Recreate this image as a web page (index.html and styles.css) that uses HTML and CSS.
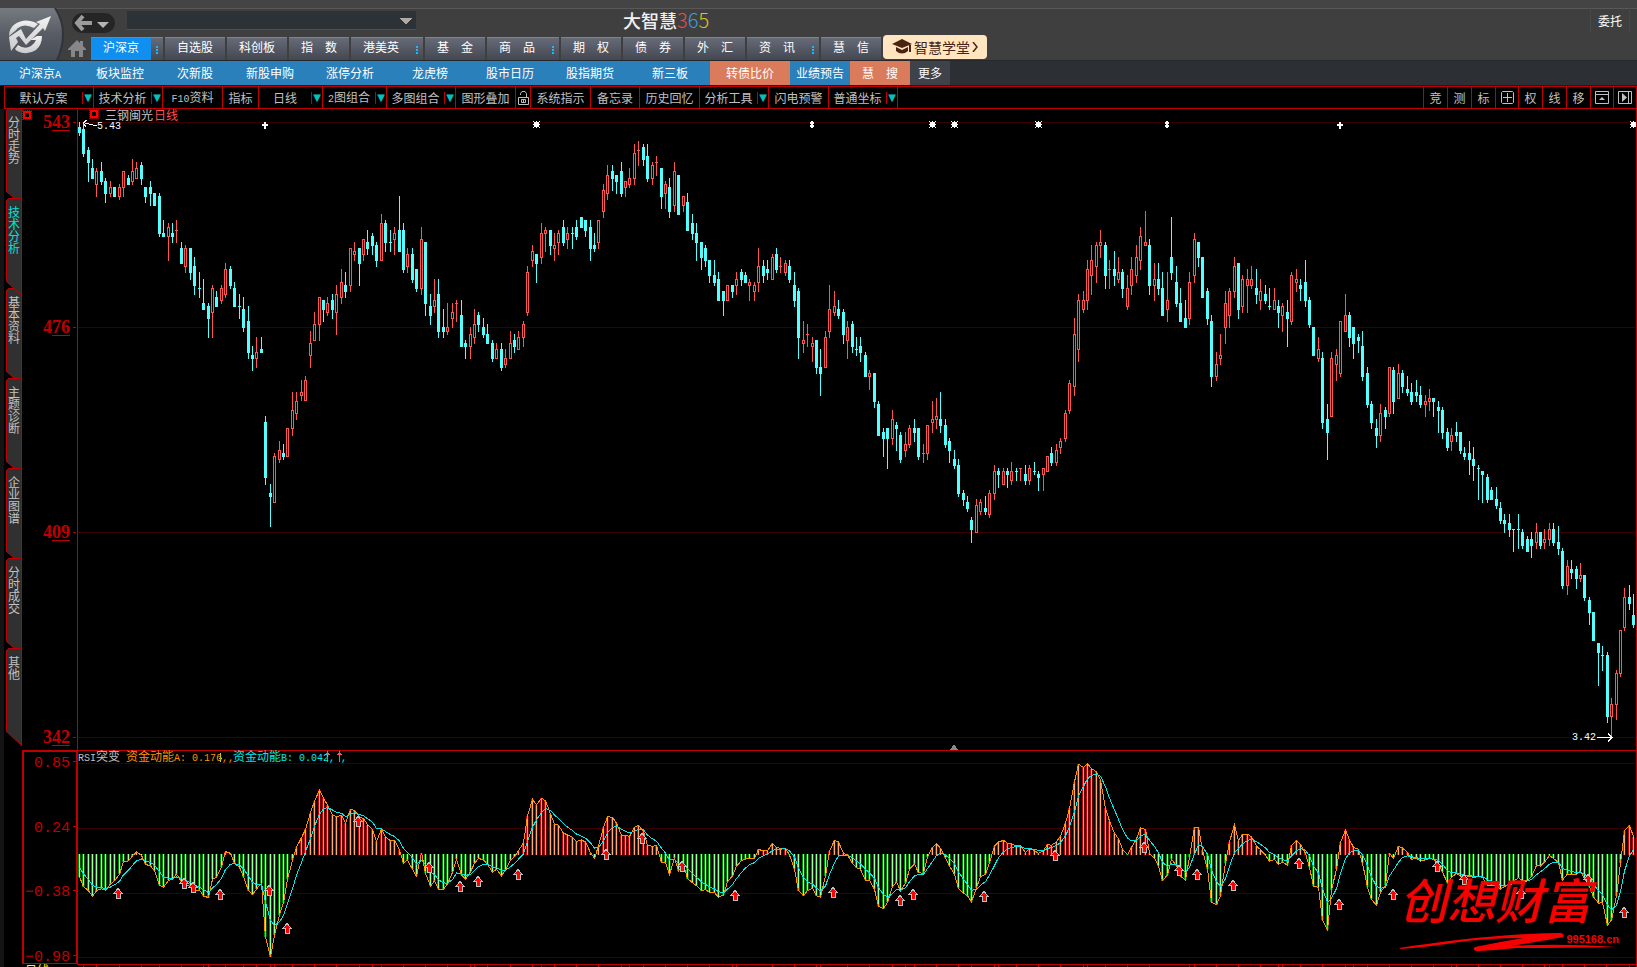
FILE: index.html
```html
<!DOCTYPE html>
<html lang="zh-CN">
<head>
<meta charset="utf-8">
<title>大智慧365</title>
<link rel="stylesheet" href="styles.css">
</head>
<body>
<header class="top">
  <div class="logo">
    <svg width="65" height="53" viewBox="0 8 65 53" aria-label="大智慧">
      <defs>
        <linearGradient id="plate" x1="0" y1="0" x2="0" y2="1"><stop offset="0" stop-color="#777b81"/><stop offset="0.5" stop-color="#585d65"/><stop offset="1" stop-color="#484d56"/></linearGradient>
        <linearGradient id="silver" x1="0" y1="0" x2="0" y2="1"><stop offset="0" stop-color="#f2f2f2"/><stop offset="1" stop-color="#c9cacd"/></linearGradient>
      </defs>
      <path d="M0 8H55Q63 20 63 34Q63 48 57 60H0Z" fill="url(#plate)"/>
      <path d="M55 8Q63 20 63 34Q63 48 57 60" fill="none" stroke="#30343a" stroke-width="2"/>
      <g fill="url(#silver)">
        <path d="M9 36Q9 28 15 24Q24 18 34 22L38 24L34 28Q24 23 18 28L15 31L9 36Z"/>
        <path d="M37 36H42Q42 45 36 50Q27 56 17 51L15 49L18 45Q25 50 31 46Q35 43 36 40H30Z"/>
        <path d="M9 37L21 29L26 39L40 24L36 22L51 16L45 31L43 28L26 45L19 36L16 38L18 42L11 51Z"/>
      </g>
    </svg>
  </div>
  <div class="top-body">
    <div class="title-row">
      <button class="back" aria-label="后退">
        <svg width="42" height="20" viewBox="0 0 42 20"><path d="M11 3L5 10L11 17M5 10H20" fill="none" stroke="#9b9b9b" stroke-width="4"/><path d="M25 9H37L31 15Z" fill="#b5b5b5"/></svg>
      </button>
      <select class="address" aria-label="地址"><option></option></select>
      <h1 class="brand">大智慧<span class="d3">3</span><span class="d6">6</span><span class="d5">5</span></h1>
      <button class="entrust">委托</button>
    </div>
    <nav class="tabs" aria-label="市场">
      <a class="home" href="#" aria-label="首页"><svg width="18" height="17" viewBox="0 0 18 17"><path d="M9 0L12 3V1H15V6L18 9V10H15V17H11V11H7V17H3V10H0V9Z" fill="#85878a"/></svg></a>
      <a class="tab wide current" href="#"><span>沪深京</span><i class="dots"></i></a>
      <a class="tab" href="#"><span>自选股</span></a>
      <a class="tab" href="#"><span>科创板</span></a>
      <a class="tab" href="#"><span>指&emsp;数</span></a>
      <a class="tab wide" href="#"><span>港美英</span><i class="dots"></i></a>
      <a class="tab" href="#"><span>基&emsp;金</span></a>
      <a class="tab wide" href="#"><span>商&emsp;品</span><i class="dots"></i></a>
      <a class="tab" href="#"><span>期&emsp;权</span></a>
      <a class="tab" href="#"><span>债&emsp;券</span></a>
      <a class="tab" href="#"><span>外&emsp;汇</span></a>
      <a class="tab wide" href="#"><span>资&emsp;讯</span><i class="dots"></i></a>
      <a class="tab" href="#"><span>慧&emsp;信</span></a>
      <a class="school" href="#">
        <svg width="20" height="17" viewBox="0 0 20 17"><path d="M0 5L10 0L20 5L10 9ZM4 8L10 11L16 8V12Q10 17 4 12ZM17 6H19V13H17Z" fill="#4a2410"/></svg>
        <span>智慧学堂</span>
        <svg width="6" height="10" viewBox="0 0 6 10"><path d="M1 0L5 5L1 10" fill="none" stroke="#4a2410" stroke-width="1.500"/></svg>
      </a>
    </nav>
  </div>
</header>

<nav class="subnav" aria-label="板块">
  <a href="#">沪深京<span class="half">A</span></a><a href="#">板块监控</a><a class="short" href="#">次新股</a><a href="#">新股申购</a><a href="#">涨停分析</a><a href="#">龙虎榜</a><a href="#">股市日历</a><a href="#">股指期货</a><a href="#">新三板</a><a class="hot" href="#">转债比价</a><a class="narrow" href="#">业绩预告</a><a class="hot narrow" href="#">慧&emsp;搜</a><a class="more" href="#">更多</a>
</nav>

<div class="toolbar">
  <button class="w89 drop"><span>默认方案</span></button>
  <button class="w69 drop"><span>技术分析</span></button>
  <button class="w60"><span><b class="half">F10</b>资料</span></button>
  <button class="w36"><span>指标</span></button>
  <button class="w64 drop"><span>日线</span></button>
  <button class="w64 drop"><span><b class="half">2</b>图组合</span></button>
  <button class="w69 drop"><span>多图组合</span></button>
  <button class="w60"><span>图形叠加</span></button>
  <button class="w15" aria-label="锁定"><svg width="11" height="14" viewBox="0 0 11 14"><path d="M.5 6.500H10.500V13.500H.5ZM2.500 4V2.500L4 .5H7L8.500 2.500V6M3.500 8.500H7.500V11.500H3.500ZM5.500 8.500V11.500" fill="none" stroke="#c0c0c0"/></svg></button>
  <button class="w60"><span>系统指示</span></button>
  <button class="w49"><span>备忘录</span></button>
  <button class="w60"><span>历史回忆</span></button>
  <button class="w69 drop"><span>分析工具</span></button>
  <button class="w60"><span>闪电预警</span></button>
  <button class="w69 drop"><span>普通坐标</span></button>
  <div class="tools">
    <button>竞</button><button>测</button><button>标</button>
    <button aria-label="放大"><svg width="13" height="13" viewBox="0 0 13 13"><path d="M1.500 .5H11.500L12.500 1.500V11.500L11.500 12.500H1.500L.5 11.500V1.500ZM2 6.500H11M6.500 2V11" fill="none" stroke="#c0c0c0"/></svg></button>
    <button>权</button><button>线</button><button>移</button>
    <button aria-label="窗口"><svg width="14" height="13" viewBox="0 0 14 13"><path d="M.5 .5H13.500V12.500H.5ZM1 3.500H13" fill="none" stroke="#c0c0c0"/><path d="M4 9H10L7 6Z" fill="#c0c0c0"/></svg></button>
    <button aria-label="下一个"><svg width="14" height="13" viewBox="0 0 14 13"><path d="M.5 .5H13.500V12.500H.5ZM10.500 1V12" fill="none" stroke="#c0c0c0"/><path d="M4 2L9 6.500L4 11Z" fill="#c0c0c0"/></svg></button>
  </div>
</div>

<main class="work">
  <nav class="side" aria-label="页面">
    <button><svg viewBox="0 0 16 100"><path d="M15.500 .5H2.500L.5 2.500V83.500L8.500 90.500H15.500Z"/></svg><span>分时走势</span></button>
    <button class="current"><svg viewBox="0 0 16 100"><path d="M15.500 .5H2.500L.5 2.500V83.500L15.500 97.500Z"/></svg><span>技术分析</span></button>
    <button><svg viewBox="0 0 16 100"><path d="M15.500 .5H2.500L.5 2.500V83.500L8.500 90.500H15.500Z"/></svg><span>基本资料</span></button>
    <button><svg viewBox="0 0 16 100"><path d="M15.500 .5H2.500L.5 2.500V83.500L8.500 90.500H15.500Z"/></svg><span>主题诊断</span></button>
    <button><svg viewBox="0 0 16 100"><path d="M15.500 .5H2.500L.5 2.500V83.500L8.500 90.500H15.500Z"/></svg><span>企业图谱</span></button>
    <button><svg viewBox="0 0 16 100"><path d="M15.500 .5H2.500L.5 2.500V83.500L8.500 90.500H15.500Z"/></svg><span>分时成交</span></button>
    <button><svg viewBox="0 0 16 100"><path d="M15.500 .5H2.500L.5 2.500V83.500L15.500 97.500Z"/></svg><span>其他</span></button>
  </nav>

  <div class="axis price-axis">
    <i class="pin"></i>
    <span>5<u>43</u></span><span>4<u>76</u></span><span>4<u>09</u></span><span>3<u>42</u></span>
  </div>
  <section class="panel price" aria-label="日线">
    <svg id="price" class="plot" viewBox="77 109 1560 641" preserveAspectRatio="none"></svg>
    <div class="legend"><i class="gear"></i><span>三钢闽光</span><span class="period">日线</span></div>
    <span class="mark high">5.43</span>
    <span class="mark low">3.42</span>
  </section>

  <div class="axis rsi-axis"><span>0.85</span><span>0.24</span><span>−0.38</span><span>−0.98</span></div>
  <section class="panel rsi" aria-label="RSI突变">
    <svg id="rsi" class="plot" viewBox="77 750 1560 217" preserveAspectRatio="none"></svg>
    <div class="readout"><span><b class="half">RSI</b>突变</span><span class="a">资金动能<b class="half">A: 0.176,,</b></span><span class="b">资金动能<b class="half">B: 0.042, ,</b></span></div>
    <div class="watermark">
      <strong>创想财富</strong>
      <svg width="220" height="20" viewBox="0 0 220 20"><path d="M0 15Q60 6 88 4Q130 0 162 0Q166 1 164 4Q150 7 112 13Q160 10 217 14Q160 15 117 15Q100 17 80 18Q72 18 76 14Q100 9 124 5Q90 5 60 9Q30 14 2 16Z" fill="#f60000"/></svg>
      <small>995168.cn</small>
    </div>
  </section>
  <div class="foot">日线</div>
</main>
<script src="chart.js"></script>
</body>
</html>
```
FILE: styles.css
```css
* { box-sizing: border-box; }
body {
  margin: 0;
  height: 100vh;
  overflow: hidden;
  display: flex;
  flex-direction: column;
  background: #000;
  color: #fff;
  font: 12px/16px "Noto Sans CJK SC", sans-serif;
}
a { color: inherit; text-decoration: none; }
button {
  margin: 0;
  padding: 0;
  border: 0;
  background: none;
  color: inherit;
  font: inherit;
  white-space: nowrap;
}
svg { display: block; flex: none; }
.half { font: 10px/12px "Liberation Mono", monospace; white-space: pre; }

/* Title bar and market tabs */
.top {
  flex: none;
  display: flex;
  height: 61px;
  padding-top: 8px;
  background: linear-gradient(#444 8px, #585858 8px, #585858 9px, #3f3f3f 9px);
  border-bottom: 1px solid #26282b;
}
.logo { width: 65px; }
.top-body { flex: 1; min-width: 0; display: flex; flex-direction: column; }
.title-row { display: flex; height: 27px; }
.back {
  margin: 5px 0 0 7px;
  width: 43px;
  height: 20px;
  border-radius: 10px;
  background: #252525;
}
.address {
  margin: 3px 0 0 12px;
  width: 289px;
  height: 19px;
  border: 0;
  border-bottom: 1px solid #4b5054;
  appearance: none;
  background: linear-gradient(to top right, #2c3236 50%, #b0aaa6 50%) 273px 7px / 6px 7px no-repeat,
    linear-gradient(to top left, #2c3236 50%, #b0aaa6 50%) 279px 7px / 6px 7px no-repeat,
    #2c3236;
}
.brand { margin: 0 0 0 207px; font-size: 18px; line-height: 24px; font-weight: 500; color: #f0f0f0; }
.brand span { font-size: 20px; font-weight: 300; }
.brand .d3 { color: #e0504a; }
.brand .d6 { color: #3a9fe0; }
.brand .d5 { color: #e0c020; }
.entrust { margin: 0 7px 0 auto; width: 40px; height: 25px; border: solid #484848; border-width: 0 1px; }
.tabs { display: flex; align-items: flex-end; gap: 2px; height: 25px; }
.home { display: flex; justify-content: center; width: 24px; height: 20px; }
.tab {
  display: flex;
  width: 60px;
  height: 23px;
  border-top: 1px solid #7e838c;
  background: linear-gradient(#666b78, #434751);
  line-height: 18px;
}
.tab.wide { width: 72px; }
.tab span { width: 60px; text-align: center; }
.tab.current span { height: 22px; background: #0f8ff0; }
.dots { width: 2px; height: 8px; margin: 8px 0 0 5px; background: repeating-linear-gradient(#1fb6ff 0 2px, transparent 2px 3px); }
.school {
  display: flex;
  align-items: center;
  justify-content: center;
  gap: 2px;
  width: 104px;
  height: 24px;
  margin-bottom: 1px;
  border-radius: 4px;
  background: #ffe6c0;
  color: #4a2410;
  font-size: 14px;
}

/* Sector links */
.subnav {
  flex: none;
  display: flex;
  height: 25px;
  background: #2c3035;
  border-bottom: 1px solid #1c1e20;
  line-height: 24px;
  text-align: center;
}
.subnav a { width: 80px; background: #2a80ba; }
.subnav .short { width: 70px; }
.subnav .narrow { width: 60px; }
.subnav .hot { background: #da7b5c; }
.subnav .more { width: 40px; background: #3f4249; }

/* Chart tool bar */
.toolbar {
  flex: none;
  display: flex;
  height: 23px;
  margin-left: 4px;
  border: solid #c00000;
  border-width: 1px 0 1px 1px;
  color: #c0c0c0;
}
.toolbar button {
  display: flex;
  flex: none;
  align-items: center;
  justify-content: center;
  border-right: 1px solid #c00000;
}
.toolbar span { flex: 1; text-align: center; }
.drop::after {
  content: "▼";
  width: 10px;
  border-left: 1px solid #c00000;
  color: #00c0c0;
  font: 10px/12px "DejaVu Sans", sans-serif;
}
.w15 { width: 15px; }
.w36 { width: 36px; }
.w49 { width: 49px; }
.w60 { width: 60px; }
.w64 { width: 64px; }
.w69 { width: 69px; }
.w89 { width: 89px; }
.tools { display: flex; margin-left: auto; border-left: 1px solid #c00000; }
.tools button { width: 24px; }
.tools button:nth-child(4), .tools button:nth-child(8), .tools button:nth-child(9) { width: 23px; }

/* Work area */
.work {
  flex: 1;
  min-height: 0;
  display: grid;
  grid-template: 641fr 214fr 3px / 22px 55px 1fr;
}
.side { grid-row: 1 / 4; padding-left: 6px; background: linear-gradient(90deg, #141414 4px, #000 4px); }
.side button { position: relative; display: block; width: 16px; height: 90px; color: #c0c0c0; }
.side svg { position: absolute; top: -1px; left: 0; width: 16px; height: 100px; }
.side path { fill: #303030; stroke: #c00000; }
.side span { position: absolute; top: 7px; left: 2px; width: 12px; line-height: 12px; white-space: normal; }
.side .current { z-index: 1; color: #00e0e0; }
.axis { display: flex; flex-direction: column; justify-content: space-between; color: #c00000; text-align: right; }
.axis span::after { content: ""; display: inline-block; width: 3px; height: 1px; margin: 0 0 5px 3px; background: #c00000; }
.price-axis { position: relative; min-width: 0; padding-right: 1px; font: bold 18px/26px "Liberation Serif", serif; }
.price-axis u { text-decoration-thickness: 1px; text-underline-offset: 2px; }
.rsi-axis { padding-top: 7px; border: 2px solid #c00000; border-width: 2px 1px 1px 2px; font: 15px/10px "Liberation Mono", monospace; }
.pin, .gear { width: 8px; height: 8px; border: 2px solid #f00; outline: 1px dotted #a00; }
.pin { position: absolute; top: 2px; left: 1px; }
.panel { position: relative; min-width: 0; min-height: 0; }
.rsi { grid-row: 2 / 4; grid-column: 3; }
.plot { position: absolute; inset: 0; width: 100%; height: 100%; shape-rendering: crispEdges; }
.legend { position: relative; display: flex; padding-left: 13px; line-height: 12px; color: #c0c0c0; }
.gear { margin: 1px 7px 0 0; }
.period { margin-left: 1px; color: #ff5050; }
.mark { position: absolute; font: 10px/12px "Liberation Mono", monospace; }
.high { top: 12px; left: 20px; }
.low { right: 41px; bottom: 6px; }
.readout { position: relative; display: flex; padding-left: 1px; line-height: 12px; color: #c0c0c0; }
.a { margin-left: 6px; color: #ff9000; }
.b { margin-left: -1px; color: #00e8e8; }
.watermark { position: absolute; right: 18px; bottom: 12px; width: 220px; height: 84px; color: #f60000; }
.watermark strong { display: block; font-size: 48px; line-height: 54px; font-weight: 500; font-style: italic; }
.watermark svg { position: absolute; left: 0; bottom: 2px; }
.watermark small { position: absolute; right: 0; bottom: 10px; font: bold 11px/12px "Liberation Sans", sans-serif; }
.foot { grid-row: 3; grid-column: 2; overflow: hidden; padding-left: 3px; line-height: 12px; color: #ff0; }
```
FILE: chart.js
```js
// Quotes: colour (c falling, r rising), x, high, body top, body bottom, low.
// Each block starts with its origin; the values are in thirds of a unit.
const quotes = [
  [0, 100, `c238 65 80 98 107,c250 65 87 161 170,c265 140 150 188 245,c277 177 204 236 236,r289 204 213 254 290,c304 186 213 245 254,c316 234 243 281 308,r331 243 261 281 290,c343 261 261 290 290,r358 252 261 290 299,r370 213 213 263 290,c385 225 234 254 254,r397 177 213 245 254,r409 186 204 236 236,c424 186 195 236 254,c436 261 261 290 308,c451 243 261 281 317,c463 279 279 317 317,c478 279 288 401 410,c490 360 399 410 410,r505 369 381 410 482,c517 369 399 410 428,r529 360 391 392 428,c544 426 444 491 491,r556 435 444 500 518,c571 444 444 518 539,c583 471 498 557 584,c598 516 564 566 593,c610 537 609 629 629,c625 609 618 656 713,r637 555 564 638 713,c649 573 591 620 620,r664 555 564 602 611,r676 489 507 584 593,c691 498 507 557 566,c703 546 564 620 620,c718 582 618 620 656,c730 591 627 683 695,c745 618 663 758 776,c757 738 765 776 812,r769 711 756 776 803,c784 711 747 758 758,c796 948 966 1133 1154,c811 1152 1179 1190 1280,r823 1059 1068 1208 1208,r838 1023 1050 1079 1088,c850 1032 1059 1070 1079,r862 984 984 1070 1070,r877 876 930 986 1007,r889 876 903 941 959`],
  [300, 120, `r4 780 816 827 843,r16 768 780 843 843,r31 633 669 707 743,r43 576 612 662 662,r58 531 531 614 662,c70 540 540 569 605,r82 531 549 578 587,c97 522 540 569 596,r109 495 522 578 644,r124 447 486 533 551,c136 456 495 515 533,r151 384 384 497 515,r163 366 393 404 422,c178 384 384 431 497,r190 357 357 404 422,c202 330 366 386 404,c217 339 348 377 404,c229 366 375 422 440,r244 282 309 422 422,c256 300 309 368 395,c271 330 366 368 395,r283 321 339 359 404,c298 228 330 395 395,c310 309 330 449 458,r322 384 402 440 458,c337 384 402 479 488,c349 447 447 506 515,r364 321 357 506 524,c376 366 366 551 587,c391 522 558 587 614,r403 477 540 560 578,c415 477 522 635 653,c430 567 621 635 653,r442 549 621 635 644,r457 549 576 596 623,r469 540 549 551 605,c484 540 585 680 680,c496 660 669 680 716,r511 621 642 680 716,r523 567 612 653 671,c535 576 585 614 635,c550 594 621 644 653,c562 612 642 671 671,c577 660 669 716 725,r589 669 687 716 716,c604 669 687 743 752,r616 687 714 734 743,r631 633 669 716 716,c643 642 660 680 698,r655 633 651 689 689,r670 603 612 653 680,r682 438 456 578 587,r697 375 393 422 440,c709 402 402 431 488,r724 309 339 413 431,r736 321 330 341 395,c751 330 330 377 404,r763 339 375 386 422,r775 330 339 368 404,c790 300 321 368 377,r802 321 339 359 386,c817 321 339 341 386,c829 300 321 350 359,c844 291 291 323 323,c856 300 300 332 350,c871 300 321 386 422,c883 339 375 386 395,r895 300 300 368 386,r910 192 210 275 293,r922 135 165 221 239,c937 135 153 177 212,c949 165 165 185 221,c964 126 153 221 230,r976 183 183 203 230,r988 144 174 194 203,r1003 72 99 177 194,r1015 63 90 92 137,c1030 72 81 119 137,c1042 72 108 177 185,r1057 126 135 177 194,r1069 108 126 128 167,c1084 144 144 230 266,r1096 183 192 221 266,c1108 174 201 275 293,r1123 126 153 257 275,c1135 165 165 284 284,r1150 228 228 257 275,c1162 219 246 332 332,c1177 282 309 341 359,c1189 309 339 368 422,c1204 366 366 413 449,c1216 375 384 422 440,c1228 420 420 467 488,c1243 420 465 488 497,c1255 456 477 542 542,c1270 513 513 542 587,r1282 495 495 542 542,c1297 495 495 515 533,r1309 456 477 497 524,c1324 447 456 479 497,c1336 456 465 488 488,r1348 477 486 497 542`],
  [750, 200, `r13 246 255 275 302,r25 144 198 248 275,c40 180 198 227 248,c52 180 207 218 239,r67 162 171 239 239,c79 144 162 209 218,r91 171 198 200 218,r106 180 189 218 227,c118 180 198 239 248,c133 216 255 302 320,c145 264 273 413 476,r160 363 420 431 458,r172 372 402 404 440,r187 411 429 440 485,c199 420 420 503 521,c211 447 501 521 587,r226 393 411 503 503,r238 255 327 395 413,r253 273 318 338 347,c265 300 327 347 356,c280 327 336 404 431,r292 363 381 422 476,c307 363 372 440 458,c319 411 447 449 467,c331 411 438 458 485,c346 456 465 530 530,r358 510 519 530 569,c373 519 519 605 623,c385 603 612 707 707,c400 684 696 716 770,c412 684 684 716 806,r427 630 657 716 734,c439 666 675 686 752,c451 696 705 779 788,r466 696 732 752 770,r478 675 684 734 743,c493 657 684 698 725,c505 684 684 770 779,r520 732 759 761 788,r532 675 675 761 779,r547 603 657 668 698,r559 594 648 659 686,c571 576 657 677 698,c586 657 675 734 743,c598 714 723 752 788,c613 750 777 797 806,c625 777 795 881 890,c640 870 879 899 917,c652 888 906 926 935,c664 951 960 989 1028,r679 897 915 998 998,r691 897 906 935 944,c706 888 924 935 944,r718 870 879 944 953,r733 795 813 881 899,c745 804 813 824 863,r760 804 813 854 854,c772 804 813 824 863,r784 786 813 842 854,c799 804 813 815 842,r811 804 804 806 842,c826 795 822 842 854,r838 795 804 842 854,c853 786 813 815 824,c865 813 822 833 872,r880 804 804 824 872,r892 768 768 815 815,c904 741 759 788 797,r919 732 750 788 797,r931 714 723 743 761,r946 630 639 716 725,r958 540 549 632 641,r973 354 402 560 587,r985 282 300 449 485,r1000 273 300 329 338,r1012 180 207 302 329,r1024 135 180 227 284,r1039 126 135 200 248,r1051 90 126 137 173,c1066 126 135 227 266,r1078 180 207 209 266,c1093 153 207 227 257,r1105 171 216 239 248,c1117 207 216 266 293,r1132 225 264 320 329,r1144 171 207 257 284,r1159 135 171 227 248,r1171 81 108 182 209,r1186 33 126 137 137,c1198 117 135 257 284,r1213 189 237 257 302,c1225 189 237 266 284,c1237 216 264 347 347,r1252 216 300 329 365,c1264 51 171 218 239,c1279 198 246 311 320,c1291 264 309 365 365,c1306 300 354 383 383,r1318 216 246 356 374`],
  [1180, 200, `r43 99 117 227 248,c55 126 126 173 200,c67 171 171 293 293,c82 264 273 356 374,c94 345 363 530 560,r109 456 492 530 542,r121 402 465 476 494,r136 273 309 383 431,r148 264 273 347 383,r163 171 198 275 293,c175 189 189 329 356,r187 225 237 320 338,r202 207 237 257 338,r214 198 237 257 266,c229 207 264 284 311,r241 237 273 302 329,c256 255 282 302 311,c268 264 318 320 329,r283 264 300 329 329,c295 300 318 338 383,r307 309 318 347 395,c322 300 336 356 440,r334 216 225 365 374,r349 207 237 248 275,c361 237 255 266 302,c376 180 246 302 320,c388 291 300 374 383,c400 381 381 467 467,r415 411 447 476 485,c427 456 474 668 686,c442 612 657 698 779,r454 456 474 650 650,r469 447 465 494 542,r481 363 363 521 530,r496 282 345 395 395,c508 336 345 413 440,c520 381 381 431 476,c535 402 411 422 458,c547 393 438 530 542,c562 501 519 614 623,c574 603 612 668 686,c589 657 684 707 743,r601 612 639 707 725,c616 621 630 650 686,r628 501 501 641 650,c640 501 510 605 641,r655 492 519 596 596,c667 510 519 560 578,c682 528 567 578 587,c694 549 576 605 614,c709 540 576 587 605,c721 558 585 614 623,r736 585 603 614 650,r748 567 594 605 632,c760 594 594 605 650,c775 603 621 632 698,c787 621 630 698 716,c802 684 696 743 752,r814 684 705 725 752,c829 666 696 707 725,c841 696 696 752 761,c853 741 759 770 779,c868 723 759 779 824,c880 741 777 797 842,c895 795 804 806 899,c907 813 813 824 908,c922 822 831 899 908,c934 861 870 899 899,c949 861 897 917 926,c961 906 924 962 971`],
  [1500, 500, `c13 42 60 71 98,c28 42 69 89 110,c40 87 87 89 155,c55 42 87 89 146,c67 87 96 137 146,c82 108 117 155 155,c94 96 117 137 173,r109 69 96 128 146,c121 96 96 137 146,r133 87 117 128 146,r148 69 87 119 137,c160 69 87 128 137,c175 78 126 146 164,c187 144 153 257 266,r202 180 198 257 284,c214 180 207 218 236,c229 198 207 236 266,r241 189 225 236 245,c253 225 225 293 302,c268 291 300 338 374,c280 336 336 422 422,c295 429 429 458 557,c307 438 465 467 512,c322 456 465 650 668,r334 594 612 650 710,r349 510 519 614 659,r361 390 390 521 530,r373 264 291 383 392,c388 255 291 311 329,c400 282 345 374 383`]
];

// Momentum line, x:y, same units.
const momentum = [
  [0, 540, `238:1010,250:1040,265:1052,277:1069,289:1052,304:1046,316:1051,331:1032,343:1022,358:1003,370:965,385:963,397:947,409:936,424:946,436:973,451:978,463:992,478:1035,490:1042,505:1021,517:1018,529:1002,544:1025,556:1033,571:1040,583:1052,598:1050,610:1068,625:1073,637:1018,649:1011,664:980,676:935,691:940,703:970,718:982,730:1010,745:1052,757:1064,769:1047,784:1030,796:1192,811:1252,823:1186,838:1124,850:1088,862:1018,877:960,889:922`],
  [300, 740, `4:293,16:268,31:218,43:184,58:149,70:175,82:195,97:225,109:230,124:226,136:250,151:208,163:211,178:232,190:235,202:254,217:268,229:304,244:268,256:290,271:303,283:301,298:330,310:370,322:360,337:388,349:409,364:338,376:400,391:438,403:423,415:448,430:448,442:432,457:397,469:358,484:405,496:418,511:395,523:370,535:355,550:360,562:373,577:397,589:388,604:407,616:390,631:360,643:350,655:332,670:308,682:228,697:178,709:195,724:175,736:182,751:222,763:252,775:256,790:280,802:284,817:292,829:304,844:300,856:306,871:338,883:355,895:318,910:262,922:230,937:232,949:250,964:286,976:286,988:289,1003:262,1015:256,1030:275,1042:316,1057:319,1069:317,1084:367,1096:368,1108:403,1123:355,1135:392,1150:372,1162:416,1177:428,1189:437,1204:452,1216:449,1228:457,1243:458,1255:472,1270:465,1282:425,1297:408,1309:378,1324:362,1336:357,1348:355`],
  [750, 740, `13:355,25:328,40:333,52:332,67:310,79:322,91:325,106:325,118:345,133:388,145:452,160:467,172:452,187:445,199:467,211:472,226:408,238:333,253:301,265:306,280:340,292:345,307:370,319:383,331:388,346:421,358:420,373:448,385:498,400:506,412:487,427:440,439:426,451:452,466:430,478:388,493:372,505:398,520:400,532:352,547:322,559:311,571:325,586:355,598:378,613:403,625:445,640:460,652:467,664:485,679:443,691:410,706:403,718:368,733:318,745:306,760:301,772:310,784:311,799:318,811:317,826:338,838:326,853:332,865:340,880:332,892:313,904:316,919:305,931:288,946:250,958:205,973:125,985:73,1000:82,1012:71,1024:86,1039:95,1051:120,1066:205,1078:243,1093:280,1105:296,1117:328,1132:344,1144:322,1159:297,1171:264,1186:268,1198:340,1213:355,1225:378,1237:422,1252:405,1264:357,1279:378,1291:408,1306:421,1318:350`],
  [1180, 740, `43:262,55:262,67:330,82:388,94:487,109:494,121:467,136:370,148:305,163:254,175:302,187:283,202:283,214:290,229:318,241:329,256:346,268:364,283:358,295:373,307:366,322:376,334:316,349:301,361:313,376:340,388:382,400:439,415:442,427:540,442:569,454:450,469:388,481:307,496:271,508:300,520:322,535:328,547:370,562:442,574:478,589:496,601:457,616:436,628:340,640:355,655:319,667:324,682:337,694:358,709:355,721:364,736:359,748:356,760:358,775:370,787:397,802:428,814:412,829:400,841:409,853:412,868:410,880:412,895:410,907:412,922:436,934:436,949:437,961:447,973:440,988:430,1000:424,1015:413,1027:422,1042:421,1054:410,1069:376,1081:378,1093:366,1108:347,1120:355,1135:368,1147:420,1162:402,1174:403,1189:403,1201:394,1213:415,1228:440,1240:470,1255:490,1267:487,1282:556,1294:540,1309:468,1321:370,1333:272,1348:256,1360:290`]
];

const signals = [
  [0, 540, '354:1044,552:1015,579:1025,660:1048,807:1036,861:1150'],
  [300, 740, '174:229,388:366,480:424,534:409,654:388,918:328,1026:280,1146:364,1305:451'],
  [750, 740, '249:442,450:466,489:448,702:454,915:331,1182:307,1287:376'],
  [1180, 740, '51:388,159:421,357:355,477:478,639:448,771:364,852:403,1023:443,1224:403,1332:502']
];

const ticks = [
  [0, '250,289,359,424,478,543,610,625,676,730,769,811,823,877'],
  [300, '43,109,178,217,244,310,376,442,511,523,562,631,697,724,763,829,895,964,988,1030,1096,1162,1228,1297,1309'],
  [750, '67,133,199,211,292,358,427,466,493,559,625,664,733,745,799,865,931,1000,1012,1066,1132,1198'],
  [1180, '28,43,109,175,241,295,307,361,427,496,520,562,628,694,760,814,829,895,961,1027,1093,1108,1147,1213,1279,1348']
];

const box = (x, y, w, h) => `M${x} ${y}h${w}v${h}h${-w}z`;
const fill = (d, color) => `<path d="${d}" fill="${color}"/>`;
const stroke = (d, color) => `<path d="${d}" fill="none" stroke="${color}"/>`;
const points = blocks => blocks.flatMap(([ox, oy, list]) => list.split(',').map(p => {
  const [x, y] = p.split(':').map(Number);
  return [ox + Math.floor(x / 3), oy + y / 3];
}));

function drawPrice() {
  let falling = '', wicks = '', bodies = '';
  for (const [ox, oy, list] of quotes) {
    for (const q of list.split(',')) {
      const [x3, ...ys] = q.slice(1).split(' ').map(Number);
      const x = ox + Math.floor(x3 / 3);
      const [h, t, b, l] = ys.map(y => oy + Math.round(y / 3));
      const body = Math.max(1, b - t);
      if (q[0] === 'c') {
        falling += box(x, h, 1, l - h) + box(x - 1, t, 3, body);
      } else {
        if (t > h) wicks += box(x, h, 1, t - h);
        if (l > b) wicks += box(x, b, 1, l - b);
        if (body < 3) wicks += box(x - 1, t, 3, body);
        else bodies += box(x - 0.5, t + 0.5, 2, body - 1);
      }
    }
  }
  const grid = [122, 327, 532, 737].map(y => box(77, y, 1560, 1)).join('');
  const plus = [265, 1340].map(x => box(x - 3, 124, 6, 2) + box(x - 1, 122, 2, 7)).join('');
  const stars = [536, 932, 954, 1038, 1633].map(x =>
    box(x - 2, 122, 5, 5) + [[-3, 121], [0, 121], [3, 121], [-3, 124], [3, 124], [-3, 127], [0, 127], [3, 127]].map(([dx, y]) => box(x + dx, y, 1, 1)).join('')).join('');
  const lozenges = [812, 1167].map(x => box(x - 1, 121, 2, 7) + box(x - 2, 122, 4, 2) + box(x - 2, 125, 4, 2)).join('');
  document.getElementById('price').innerHTML =
    fill(grid, '#3a0000') + fill(falling, '#54ffff') + fill(wicks, '#ff5454') + stroke(bodies, '#ff5454') +
    fill(plus + stars + lozenges, '#fff') +
    stroke('M83 122.500L97 126M83 122.500L87 120M83 122.500L86 127M1597 737.500H1612M1608 733.500L1612 737.500L1608 741.500', '#fff') +
    fill('M950 750L954 744L958 750Z', '#888') + fill(box(77, 109, 1, 641) + box(1636, 109, 1, 641), '#c00000');
}

function drawMomentum() {
  const line = points(momentum);
  const layers = { '#008c00': '', '#a0ffa0': '', '#005a00': '', '#d00000': '', '#ffa878': '', '#640000': '' };
  const colors = Object.keys(layers);
  let average = 867.7;
  const smooth = line.map(([x, y], i) => {
    if (i) average += (y - average) / 3;
    const down = y > 854.5;
    const top = down ? 854 : Math.round(y);
    const height = Math.max(1, Math.abs(Math.round(y) - (down ? 854 : 855)));
    for (let k = 0; k < 3; k++) layers[colors[(down ? 0 : 3) + k]] += box(x - 1 + k, top, 1, height);
    return [x, average];
  });
  const poly = pts => 'M' + pts.map(([x, y]) => `${x + 0.5} ${y.toFixed(1)}`).join('L');
  const grid = [763, 828, 893, 957].map(y => box(77, y, 1560, 1)).join('');
  const marks = ticks.map(([ox, list]) => list.split(',').map(t => box(ox + Math.floor(t / 3), 965, 1, 2)).join('')).join('');
  const arrows = points(signals).map(([x, y]) =>
    `<path d="M${x} ${Math.round(y) + 0.5}l4.500 5h-2.500v5h-4v-5h-2.500z" fill="#f00" stroke="#c0c0c0"/>`).join('');
  document.getElementById('rsi').innerHTML =
    fill(grid, '#3a0000') +
    Object.entries(layers).map(([color, d]) => fill(d, color)).join('') +
    stroke(poly(line), '#ff9000') + stroke(poly(smooth), '#00e8e8') + arrows +
    fill('M220 753h1v5h1l-1.500 4l-1.500-4h1z', '#54ff54') +
    fill('M325 755l2.500-4l2.500 4h-2v7h-1v-7zM337 755l2.500-4l2.500 4h-2v7h-1v-7z', '#ff5454') +
    fill(box(77, 750, 1560, 1) + box(77, 964, 1560, 1) + box(77, 750, 1, 215) + box(1636, 750, 1, 217) + marks, '#c00000');
}

drawPrice();
drawMomentum();
```
